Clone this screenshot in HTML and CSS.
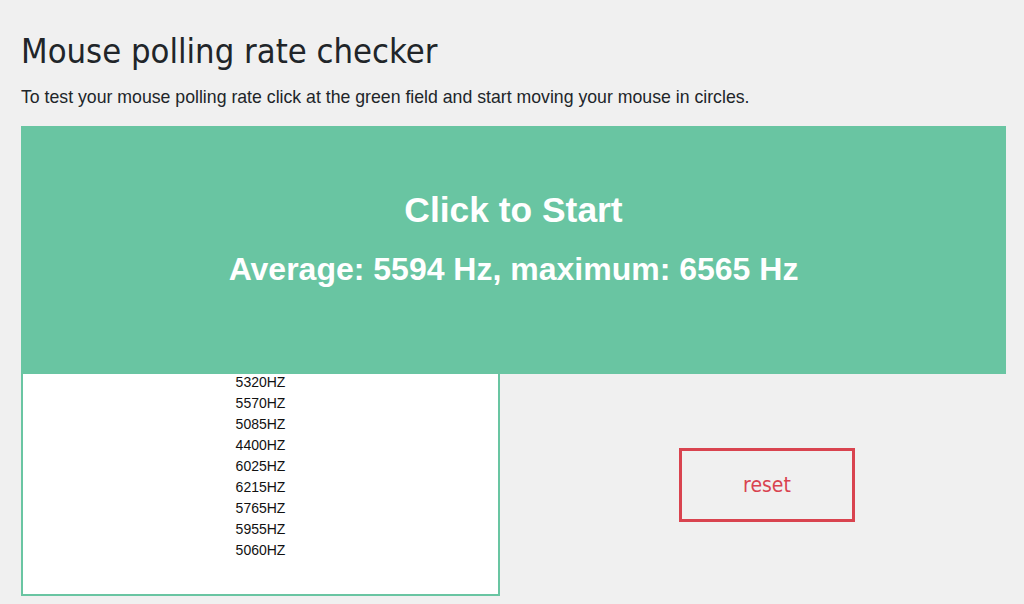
FILE: index.html
```html
<!DOCTYPE html>
<html lang="en">
<head>
    <meta charset="UTF-8">
    <meta name="viewport" content="width=device-width, initial-scale=1.0">
    <title>Mouse polling rate checker</title>
    <link rel="stylesheet" href="styles.css">
</head>
<body>
    <div class="page">
        <h1>Mouse polling rate checker</h1>
        <p class="intro">To test your mouse polling rate click at the green field and start moving your mouse in circles.</p>

        <div class="field" id="field">
            <h2>Click to Start</h2>
            <p class="stats">Average: 5594 Hz, maximum: 6565 Hz</p>
        </div>

        <div class="bottom">
            <div class="log" id="log">
                <div>5320HZ</div>
                <div>5570HZ</div>
                <div>5085HZ</div>
                <div>4400HZ</div>
                <div>6025HZ</div>
                <div>6215HZ</div>
                <div>5765HZ</div>
                <div>5955HZ</div>
                <div>5060HZ</div>
            </div>
            <div class="actions">
                <button class="reset" type="button">reset</button>
            </div>
        </div>
    </div>
</body>
</html>
```

FILE: styles.css
```css
body {
    margin: 0;
    padding: 0;
    background: #f0f0f0;
    color: #212529;
    font-family: "Liberation Sans", Arial, sans-serif;
}
.page {
    padding: 0 18px 0 21px;
}
h1 {
    margin: 0;
    padding-top: 29px;
    font-family: "DejaVu Sans Condensed", "DejaVu Sans", sans-serif;
    font-weight: normal;
    font-size: 34.3px;
    line-height: 44px;
}
.intro {
    margin: 12px 0 17px;
    font-size: 17.7px;
    line-height: 24px;
}
.field {
    position: relative;
    z-index: 1;
    height: 248px;
    background: #69c5a2;
    color: #fff;
    text-align: center;
    box-sizing: border-box;
    padding-top: 61px;
}
.field h2 {
    margin: 0;
    font-size: 35.4px;
    line-height: 46px;
}
.stats {
    margin: 16px 0 0;
    font-size: 32px;
    font-weight: bold;
    line-height: 40px;
}
.bottom {
    display: flex;
    align-items: center;
}
.log {
    width: 479px;
    height: 226px;
    margin-top: -4px;
    box-sizing: border-box;
    background: #fff;
    border: 2px solid #69c5a2;
    text-align: center;
    font-size: 14px;
    line-height: 21px;
    color: #111;
    overflow: hidden;
}
.actions {
    flex: 1;
    padding-left: 179px;
}
.reset {
    width: 176px;
    height: 74px;
    background: transparent;
    border: 3px solid #d9434f;
    color: #d9434f;
    font-family: "DejaVu Sans Condensed", "DejaVu Sans", sans-serif;
    font-size: 21px;
    cursor: pointer;
}
```
